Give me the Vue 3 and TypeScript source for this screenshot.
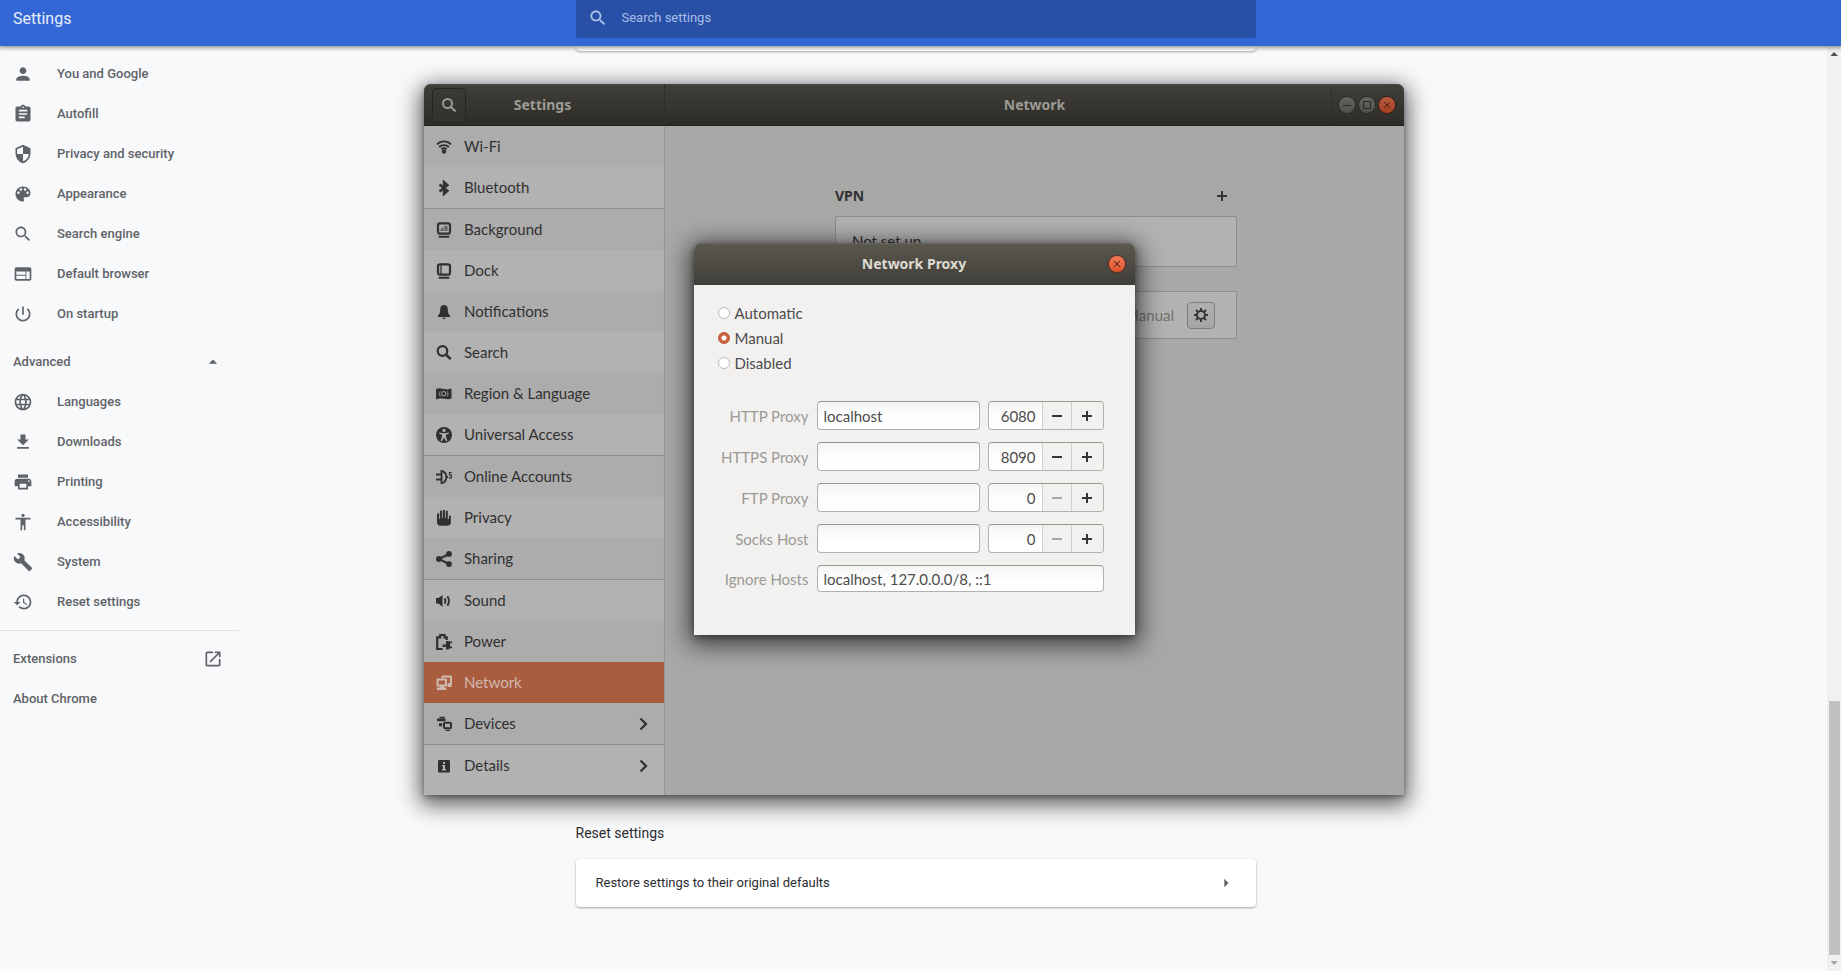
<script setup lang="ts">
import { ref } from 'vue'

interface NavItem {
  label: string
  icon: string
}

interface PanelItem {
  label: string
  icon: string
  endsGroup?: boolean
  submenu?: boolean
}

interface ProxyRow {
  id: string
  label: string
  host: string
  port: number
}

const basicItems: NavItem[] = [
  { label: 'You and Google', icon: 'M12 12c2.21 0 4-1.79 4-4s-1.79-4-4-4-4 1.79-4 4 1.79 4 4 4zm0 2c-2.67 0-8 1.34-8 4v2h16v-2c0-2.66-5.33-4-8-4z' },
  { label: 'Autofill', icon: 'M19 3h-4.18C14.4 1.84 13.3 1 12 1c-1.3 0-2.4.84-2.82 2H5c-1.1 0-2 .9-2 2v14c0 1.1.9 2 2 2h14c1.1 0 2-.9 2-2V5c0-1.1-.9-2-2-2zm-7 0c.55 0 1 .45 1 1s-.45 1-1 1-1-.45-1-1 .45-1 1-1zm2 14H7v-2h7v2zm3-4H7v-2h10v2zm0-4H7V7h10v2z' },
  { label: 'Privacy and security', icon: 'M12 1L3 5v6c0 5.55 3.84 10.74 9 12 5.16-1.26 9-6.45 9-12V5l-9-4zm0 10.99h7c-.53 4.12-3.28 7.79-7 8.94V12H5V6.3l7-3.11v8.8z' },
  { label: 'Appearance', icon: 'M12 3c-4.97 0-9 4.03-9 9s4.03 9 9 9c.83 0 1.5-.67 1.5-1.5 0-.39-.15-.74-.39-1.01-.23-.26-.38-.61-.38-.99 0-.83.67-1.5 1.5-1.5H16c2.76 0 5-2.24 5-5 0-4.42-4.03-8-9-8zm-5.5 9c-.83 0-1.5-.67-1.5-1.5S5.67 9 6.5 9 8 9.67 8 10.5 7.33 12 6.5 12zm3-4C8.67 8 8 7.33 8 6.5S8.67 5 9.5 5s1.5.67 1.5 1.5S10.33 8 9.5 8zm5 0c-.83 0-1.5-.67-1.5-1.5S13.67 5 14.5 5s1.5.67 1.5 1.5S15.33 8 14.5 8zm3 4c-.83 0-1.5-.67-1.5-1.5S16.67 9 17.5 9s1.5.67 1.5 1.5-.67 1.5-1.5 1.5z' },
  { label: 'Search engine', icon: 'M15.5 14h-.79l-.28-.27C15.41 12.59 16 11.11 16 9.5 16 5.91 13.09 3 9.5 3S3 5.91 3 9.5 5.91 16 9.5 16c1.61 0 3.09-.59 4.23-1.57l.27.28v.79l5 4.99L20.49 19l-4.99-5zm-6 0C7.01 14 5 11.99 5 9.5S7.01 5 9.5 5 14 7.01 14 9.5 11.99 14 9.5 14z' },
  { label: 'Default browser', icon: 'M20 4H4c-1.1 0-1.99.9-1.99 2L2 18c0 1.1.9 2 2 2h16c1.1 0 2-.9 2-2V6c0-1.1-.9-2-2-2zm-5 14H4v-4h11v4zm0-5H4V9h11v4zm5 5h-4V9h4v9z' },
  { label: 'On startup', icon: 'M13 3h-2v10h2V3zm4.83 2.17l-1.42 1.42C17.99 7.86 19 9.81 19 12c0 3.87-3.13 7-7 7s-7-3.13-7-7c0-2.19 1.01-4.14 2.58-5.42L6.17 5.17C4.23 6.82 3 9.26 3 12c0 4.97 4.03 9 9 9s9-4.03 9-9c0-2.74-1.23-5.18-3.17-6.83z' }
]

const advancedItems: NavItem[] = [
  { label: 'Languages', icon: 'M11.99 2C6.47 2 2 6.48 2 12s4.47 10 9.99 10C17.52 22 22 17.52 22 12S17.52 2 11.99 2zm6.93 6h-2.95c-.32-1.25-.78-2.45-1.38-3.56 1.84.63 3.37 1.91 4.33 3.56zM12 4.04c.83 1.2 1.48 2.53 1.91 3.96h-3.82c.43-1.43 1.08-2.76 1.91-3.96zM4.26 14C4.1 13.36 4 12.69 4 12s.1-1.36.26-2h3.38c-.08.66-.14 1.32-.14 2s.06 1.34.14 2H4.26zm.82 2h2.95c.32 1.25.78 2.45 1.38 3.56-1.84-.63-3.37-1.9-4.33-3.56zm2.95-8H5.08c.96-1.66 2.49-2.93 4.33-3.56C8.81 5.55 8.35 6.75 8.03 8zM12 19.96c-.83-1.2-1.48-2.53-1.91-3.96h3.82c-.43 1.43-1.08 2.76-1.91 3.96zM14.34 14H9.66c-.09-.66-.16-1.32-.16-2s.07-1.35.16-2h4.68c.09.65.16 1.32.16 2s-.07 1.34-.16 2zm.25 5.56c.6-1.11 1.06-2.31 1.38-3.56h2.95c-.96 1.65-2.49 2.93-4.33 3.56zM16.36 14c.08-.66.14-1.32.14-2s-.06-1.34-.14-2h3.38c.16.64.26 1.31.26 2s-.1 1.36-.26 2h-3.38z' },
  { label: 'Downloads', icon: 'M19 9h-4V3H9v6H5l7 7 7-7zM5 18v2h14v-2H5z' },
  { label: 'Printing', icon: 'M19 8H5c-1.66 0-3 1.34-3 3v6h4v4h12v-4h4v-6c0-1.66-1.34-3-3-3zm-3 11H8v-5h8v5zm3-7c-.55 0-1-.45-1-1s.45-1 1-1 1 .45 1 1-.45 1-1 1zm-1-9H6v4h12V3z' },
  { label: 'Accessibility', icon: 'M12 2c1.1 0 2 .9 2 2s-.9 2-2 2-2-.9-2-2 .9-2 2-2zm9 7h-6v13h-2v-6h-2v6H9V9H3V7h18v2z' },
  { label: 'System', icon: 'M22.7 19l-9.1-9.1c.9-2.3.4-5-1.5-6.9-2-2-5-2.4-7.4-1.3L9 6 6 9 1.6 4.7C.4 7.1.9 10.1 2.9 12.1c1.9 1.9 4.6 2.4 6.9 1.5l9.1 9.1c.4.4 1 .4 1.4 0l2.3-2.3c.5-.4.5-1.1.1-1.4z' },
  { label: 'Reset settings', icon: 'M13 3c-4.97 0-9 4.03-9 9H1l3.89 3.89.07.14L9 12H6c0-3.87 3.13-7 7-7s7 3.13 7 7-3.13 7-7 7c-1.93 0-3.68-.79-4.94-2.06l-1.42 1.42C8.27 19.99 10.51 21 13 21c4.97 0 9-4.03 9-9s-4.03-9-9-9zm-1 5v5l4.28 2.54.72-1.21-3.5-2.08V8H12z' }
]

const panelItems: PanelItem[] = [
  { label: 'Wi-Fi', icon: 'wifi' },
  { label: 'Bluetooth', icon: 'bluetooth', endsGroup: true },
  { label: 'Background', icon: 'background' },
  { label: 'Dock', icon: 'dock' },
  { label: 'Notifications', icon: 'bell' },
  { label: 'Search', icon: 'search' },
  { label: 'Region & Language', icon: 'flag' },
  { label: 'Universal Access', icon: 'access', endsGroup: true },
  { label: 'Online Accounts', icon: 'accounts' },
  { label: 'Privacy', icon: 'hand' },
  { label: 'Sharing', icon: 'share', endsGroup: true },
  { label: 'Sound', icon: 'sound' },
  { label: 'Power', icon: 'power' },
  { label: 'Network', icon: 'network' },
  { label: 'Devices', icon: 'devices', submenu: true, endsGroup: true },
  { label: 'Details', icon: 'details', submenu: true }
]

const activePanel = ref('Network')
const modes = ['Automatic', 'Manual', 'Disabled']
const mode = ref('Manual')
const proxies = ref<ProxyRow[]>([
  { id: 'http', label: 'HTTP Proxy', host: 'localhost', port: 6080 },
  { id: 'https', label: 'HTTPS Proxy', host: '', port: 8090 },
  { id: 'ftp', label: 'FTP Proxy', host: '', port: 0 },
  { id: 'socks', label: 'Socks Host', host: '', port: 0 }
])
const ignoreHosts = ref('localhost, 127.0.0.0/8, ::1')
const advancedOpen = ref(true)
</script>

<template>
  <div class="page">
    <header class="topbar">
      <h1>Settings</h1>
      <label class="search">
        <svg viewBox="0 0 24 24" class="ic20"><path :d="basicItems[4].icon" /></svg>
        <input type="text" placeholder="Search settings" aria-label="Search settings" />
      </label>
    </header>

    <div class="content">
      <nav class="menu">
        <a v-for="item in basicItems" :key="item.label" href="#" class="menu-item">
          <svg viewBox="0 0 24 24" class="ic20"><path :d="item.icon" /></svg>
          <span>{{ item.label }}</span>
        </a>
        <button type="button" class="advanced" @click="advancedOpen = !advancedOpen">
          <span>Advanced</span>
          <svg viewBox="0 0 24 24" class="ic20"><path d="M7 14l5-5 5 5z" /></svg>
        </button>
        <template v-if="advancedOpen">
          <a v-for="item in advancedItems" :key="item.label" href="#" class="menu-item">
            <svg viewBox="0 0 24 24" class="ic20"><path :d="item.icon" /></svg>
            <span>{{ item.label }}</span>
          </a>
        </template>
        <hr />
        <a href="#" class="menu-link">
          <span>Extensions</span>
          <svg viewBox="0 0 24 24" class="ic20"><path d="M19 19H5V5h7V3H5c-1.11 0-2 .9-2 2v14c0 1.1.89 2 2 2h14c1.1 0 2-.9 2-2v-7h-2v7zM14 3v2h3.59l-9.83 9.83 1.41 1.41L19 6.41V10h2V3h-7z" /></svg>
        </a>
        <a href="#" class="menu-link"><span>About Chrome</span></a>
      </nav>

      <main class="column">
        <div class="card card-tail"></div>
        <section class="reset">
          <h2>Reset settings</h2>
          <button type="button" class="card restore">
            <span>Restore settings to their original defaults</span>
            <svg viewBox="0 0 24 24" class="ic20"><path d="M10 7l5 5-5 5z" /></svg>
          </button>
        </section>
      </main>
    </div>

    <div class="scrollbar" aria-hidden="true">
      <svg viewBox="0 0 14 16"><path d="M3.500 10L7 6l4 4z" fill="#505050" /></svg>
      <div class="thumb"></div>
      <svg viewBox="0 0 14 16"><path d="M3.500 6L7 10l4-4z" fill="#a3a3a3" /></svg>
    </div>

    <div class="window">
      <header class="titlebar">
        <div class="title-left">
          <button type="button" class="find" aria-label="Search">
            <svg viewBox="0 0 16 16"><circle cx="6.500" cy="6.500" r="4.500" /><path d="M10 10l4.500 4.500" /></svg>
          </button>
          <h2>Settings</h2>
        </div>
        <div class="title-right">
          <h2>Network</h2>
          <div class="controls">
            <button type="button" class="round" aria-label="Minimize">
              <svg viewBox="0 0 16 16"><path d="M4 8.500h8" /></svg>
            </button>
            <button type="button" class="round" aria-label="Maximize">
              <svg viewBox="0 0 16 16"><path d="M4.500 4.500h7v7h-7z" /></svg>
            </button>
            <button type="button" class="round close dim" aria-label="Close">
              <svg viewBox="0 0 16 16"><path d="M5 5l6 6M11 5l-6 6" /></svg>
            </button>
          </div>
        </div>
      </header>

      <div class="window-body">
        <nav class="panels">
          <button
            v-for="item in panelItems"
            :key="item.label"
            type="button"
            class="panel"
            :class="{ active: item.label === activePanel, ends: item.endsGroup }"
            @click="activePanel = item.label"
          >
            <svg class="sym" viewBox="0 0 16 16">
              <template v-if="item.icon === 'wifi'">
                <circle cx="8" cy="12.500" r="2.200" />
                <path class="ln" d="M1 5.400C5 1.400 11 1.400 15 5.400M3.100 8c2.700-2.600 7.100-2.600 9.800 0M5.300 10.300c1.500-1.300 3.900-1.300 5.400 0" stroke-width="1.800" />
              </template>
              <path v-else-if="item.icon === 'bluetooth'" class="ln" d="M3.500 4.500l8 6.300L8 14V2l3.500 3.200-8 6.300" stroke-width="2.400" />
              <template v-else-if="item.icon === 'background'">
                <rect class="ln" x="2" y="1.300" width="12" height="10.400" rx="2" stroke-width="2.200" />
                <path d="M4.500 9V7.500L7.500 4.500V9zM8.500 4h3v5h-3z" opacity=".6" />
                <path class="ln" d="M3.500 14.800h9" stroke-width="2" stroke-linecap="round" />
              </template>
              <template v-else-if="item.icon === 'dock'">
                <rect class="ln" x="2" y="1.300" width="12" height="10.400" rx="2" stroke-width="2.200" />
                <path class="ln" d="M5 2v9" stroke-width="1.200" />
                <path class="ln" d="M3.500 14.800h9" stroke-width="2" stroke-linecap="round" />
              </template>
              <path v-else-if="item.icon === 'bell'" d="M8 1C5.200 1 4.200 3 4.200 5.500c0 3.500-.7 4.500-2.200 6V13h12v-1.500c-1.500-1.500-2.200-2.500-2.200-6C11.800 3 10.800 1 8 1zM6.300 13.700a1.700 1.400 0 003.400 0z" />
              <template v-else-if="item.icon === 'search'">
                <circle class="ln" cx="6.500" cy="6" r="4.800" stroke-width="2.200" />
                <path class="ln" d="M10 9.500l4.700 4.700" stroke-width="2.600" />
              </template>
              <template v-else-if="item.icon === 'flag'">
                <path d="M0 3c3-1.300 5-.6 8 0s5 .5 7.500-.4V12.500c-3 1.300-5 .5-7.500.2s-5-.6-8 .8z" />
                <circle cx="7.700" cy="7.700" r="2.200" fill="none" stroke="#acacac" />
                <path d="M4.300 5.300c-1 1.500-1 3.500 0 5M11.200 5.300c1 1.500 1 3.500 0 5" fill="none" stroke="#acacac" stroke-width=".8" />
              </template>
              <template v-else-if="item.icon === 'access'">
                <circle cx="8" cy="8" r="8" />
                <circle cx="8" cy="3.400" r="1.600" fill="#b2b2b2" />
                <path d="M3.200 5.400l3.300.8h3l3.300-.8.200 1.100-3.100 1.200v2l1.500 4-1.300.5L8 10.400l-2.100 3.800-1.300-.5 1.500-4v-2L3 6.500z" fill="#b2b2b2" />
              </template>
              <template v-else-if="item.icon === 'accounts'">
                <path class="ln" d="M5.500 2v12.200c3-.5 4.800-3 4.800-6.100S8.500 2.500 5.500 2z" stroke-width="1.800" />
                <path class="ln" d="M0 5.500h5M0 10.500h5M10 8h2" stroke-width="2" />
                <path class="ln" d="M15.700 3.500h-2.200V6h1.800v2.800h-2.500" stroke-width="1.200" />
              </template>
              <path v-else-if="item.icon === 'hand'" d="M1 4.200a1 1 0 012 0V9h.8V1.500a1 1 0 012.100 0V8h.8V1a1.100 1.100 0 012.200 0v7h.8V1.500a1 1 0 012.100 0V9h1.100V6.500a1 1 0 012 0V12c0 2.500-1.400 3.800-3.500 3.800H4.500C2.300 15.800 1 14.500 1 12z" />
              <template v-else-if="item.icon === 'share'">
                <circle cx="2.900" cy="8" r="2.900" /><circle cx="13" cy="2.900" r="2.900" /><circle cx="13" cy="13.100" r="2.900" />
                <path class="ln" d="M13 3L3 8l10 5" stroke-width="2" />
              </template>
              <template v-else-if="item.icon === 'sound'">
                <path d="M0 5h2.500L6.500 2v12l-4-3.500H0z" />
                <path class="ln" d="M8.700 5.300c1 1.700 1 3.700 0 5.400M11.400 3.300c2 3 2 6.400 0 9.400" stroke-width="1.900" />
              </template>
              <template v-else-if="item.icon === 'power'">
                <path class="ln" d="M10.700 6V3.300H8.500V1H4.200v2.300H1.200V15h5.500" stroke-width="2.200" />
                <path d="M16 7.500v1.800h-2v3.200h2v1.700h-2.200c-.7 1.300-2.200 1.600-3.800 1.300V13H6.500v-2.500H10V7.200c1.600-.4 3 .2 3.800.3z" />
              </template>
              <template v-else-if="item.icon === 'network'">
                <path class="ln" d="M6.500 3.200V1.500H15v7.500h-3M1.500 4.500H10v6H1.500z" stroke-width="2" stroke-linejoin="round" />
                <path d="M4 11h4v2H4zM.8 12.600h9.500V15H.8zM11.500 9h4v3h-4z" />
              </template>
              <template v-else-if="item.icon === 'devices'">
                <path d="M3.500.8h5.200v1.400H3.500zM1 2.500h8.500v2.700H1zM3 7.200h3.200v3H3z" />
                <rect class="ln" x="8" y="6.800" width="7" height="5.400" rx="1" stroke-width="2" />
                <path d="M9.500 13.800h4.500V15H9.500z" />
              </template>
              <template v-else>
                <rect x="2" y="2" width="12" height="12.500" rx="1.200" />
                <path d="M7 4h2v2H7zM6 7h3v4h1v1.500H6V11h1V8.300H6z" fill="#b2b2b2" />
              </template>
            </svg>
            <span class="panel-label">{{ item.label }}</span>
            <svg v-if="item.submenu" class="sym" viewBox="0 0 16 16">
              <path class="ln" d="M4.500 2.500L10 8l-5.500 5.500" stroke-width="2.200" />
            </svg>
          </button>
        </nav>

        <section class="network">
          <div class="vpn-head">
            <h3>VPN</h3>
            <button type="button" class="add" aria-label="Add VPN">
              <svg viewBox="0 0 16 16"><path d="M8 3v10M3 8h10" /></svg>
            </button>
          </div>
          <div class="box vpn-box">Not set up</div>
          <div class="box proxy-box">
            <span>Network Proxy</span>
            <span class="state">Manual</span>
            <button type="button" class="gear" aria-label="Proxy options">
              <svg viewBox="0 0 16 16">
                <circle cx="8" cy="8" r="4" fill="none" stroke="#353535" stroke-width="2" />
                <path d="M8 1v2.500M8 12.500V15M1 8h2.500M12.500 8H15M3 3l2 2M11 11l2 2M13 3l-2 2M5 11l-2 2" stroke="#353535" stroke-width="2" />
              </svg>
            </button>
          </div>
        </section>
      </div>

      <div class="overlay">
        <form class="dialog" role="dialog" aria-labelledby="dialog-title" @submit.prevent>
          <header class="dialog-bar">
            <h2 id="dialog-title">Network Proxy</h2>
            <button type="button" class="round close" aria-label="Close">
              <svg viewBox="0 0 16 16"><path d="M5 5l6 6M11 5l-6 6" /></svg>
            </button>
          </header>
          <div class="dialog-body">
            <div class="modes">
              <label v-for="m in modes" :key="m">
                <input v-model="mode" type="radio" name="mode" :value="m" />
                <span>{{ m }}</span>
              </label>
            </div>
            <div class="fields">
              <template v-for="row in proxies" :key="row.id">
                <label :for="row.id">{{ row.label }}</label>
                <input :id="row.id" v-model="row.host" type="text" class="entry" />
                <div class="spin">
                  <input v-model.number="row.port" type="text" inputmode="numeric" :aria-label="row.label + ' port'" />
                  <button type="button" :disabled="row.port === 0" aria-label="Decrease" @click="row.port--">
                    <svg viewBox="0 0 16 16"><path d="M3 8h10" /></svg>
                  </button>
                  <button type="button" aria-label="Increase" @click="row.port++">
                    <svg viewBox="0 0 16 16"><path d="M8 3v10M3 8h10" /></svg>
                  </button>
                </div>
              </template>
              <label for="ignore">Ignore Hosts</label>
              <input id="ignore" v-model="ignoreHosts" type="text" class="entry wide" />
            </div>
          </div>
        </form>
      </div>
    </div>
  </div>
</template>

<style>
body {
  background: #f8f9fb;
}
</style>

<style scoped>
* {
  box-sizing: border-box;
}

h1,
h2,
h3 {
  margin: 0;
}

button,
input {
  margin: 0;
  padding: 0;
  border: 0;
  background: none;
  font: inherit;
  color: inherit;
}

a {
  color: inherit;
  text-decoration: none;
}

.page {
  position: relative;
  display: flex;
  flex-direction: column;
  min-height: 100vh;
  overflow: hidden;
  background: #f8f9fb;
  color: #5f6368;
  font: 500 13px/20px Roboto, sans-serif;
}

.ic20 {
  width: 20px;
  height: 20px;
  fill: currentColor;
  flex: none;
}

/* Browser settings page */
.topbar,
.content {
  display: grid;
  grid-template-columns: minmax(0, 1fr) 680px minmax(0, 1fr);
  padding-right: 10px;
}

.topbar {
  position: relative;
  height: 46px;
  background: #3367d6;
  box-shadow: 0 1px 4px 1px rgba(0, 0, 0, 0.4);
  z-index: 1;
}

.topbar h1 {
  padding: 9px 13px;
  color: #e8eefa;
  font-size: 16px;
  font-weight: 400;
  line-height: 20px;
}

.search {
  display: flex;
  align-items: center;
  gap: 14px;
  height: 38px;
  padding: 0 12px 2px;
  border-radius: 0 0 2px 2px;
  background: #2850a7;
  color: #b4c6ec;
}

.search input {
  flex: 1;
  font-weight: 400;
  outline: 0;
}

.search input::placeholder {
  color: #a9bde6;
  opacity: 1;
}

.content {
  flex: 1;
}

.menu {
  width: 239px;
  padding-top: 8px;
}

.menu-item,
.menu-link,
.advanced {
  display: flex;
  align-items: center;
  width: 100%;
  height: 40px;
  padding: 0 16px 0 13px;
}

.menu-item {
  gap: 24px;
}

.menu-link,
.advanced {
  justify-content: space-between;
}

.advanced {
  margin-top: 8px;
}

.menu hr {
  height: 1px;
  margin: 8px 0;
  border: 0;
  background: #e0e1e3;
}

.column {
  display: flex;
  flex-direction: column;
  justify-content: space-between;
  color: #2b2c2f;
  font-weight: 400;
}

.card {
  border-radius: 4px;
  background: #fff;
  box-shadow: 0 1px 2px rgba(60, 64, 67, 0.3), 0 1px 3px rgba(60, 64, 67, 0.2);
}

.card-tail {
  height: 5px;
  border-radius: 0 0 4px 4px;
}

.reset {
  padding-bottom: 64px;
}

.reset h2 {
  margin-bottom: 16px;
  font-size: 14px;
  font-weight: 400;
  line-height: 20px;
}

.restore {
  display: flex;
  align-items: center;
  justify-content: space-between;
  width: 100%;
  height: 48px;
  padding: 0 20px;
}

.restore .ic20 {
  color: #5f6368;
}

.scrollbar {
  position: absolute;
  top: 46px;
  right: 0;
  bottom: 0;
  display: flex;
  flex-direction: column;
  align-items: center;
  justify-content: space-between;
  width: 14px;
  background: #f1f1f1;
}

.scrollbar svg {
  flex: none;
  width: 14px;
  height: 16px;
}

.thumb {
  width: 11px;
  height: 254px;
  margin-top: auto;
  background: #c1c1c1;
}

/* Desktop window floating over the page */
.window {
  position: absolute;
  left: 424px;
  top: 84px;
  display: flex;
  flex-direction: column;
  width: 980px;
  border-radius: 7px 7px 0 0;
  background: #a8a8a6;
  box-shadow: 0 6px 22px 4px rgba(0, 0, 0, 0.62), 0 2px 5px rgba(0, 0, 0, 0.3);
  color: #303030;
  font: 400 15px/20px Lato, sans-serif;
  z-index: 2;
}

.titlebar {
  display: flex;
  height: 42px;
  border-radius: 7px 7px 0 0;
  background: linear-gradient(#403f39, #2c2b27);
  box-shadow: inset 0 1px #4b4a43, inset 0 -1px #22211e;
  color: #9c9b94;
}

h2,
h3 {
  font: 700 14px/20px 'Noto Sans', sans-serif;
}

.reset h2 {
  font-family: Roboto, sans-serif;
}

.title-left {
  display: flex;
  align-items: center;
  width: 241px;
  padding: 0 8px;
  border-right: 1px solid #2f2e2a;
}

.title-left h2 {
  flex: 1;
  padding-right: 37px;
  text-align: center;
}

.find {
  display: grid;
  place-items: center;
  width: 34px;
  height: 35px;
  border: 1px solid #262521;
  border-radius: 4px;
  background: linear-gradient(#3a3934, #32312c);
}

.find svg {
  width: 16px;
  height: 16px;
  fill: none;
  stroke: #9c9b94;
  stroke-width: 2;
}

.title-right {
  display: grid;
  grid-template-columns: 73px 1fr 73px;
  align-items: center;
  flex: 1;
}

.title-right h2 {
  grid-column: 2;
  text-align: center;
}

.controls {
  display: flex;
  align-items: center;
  justify-content: flex-end;
  gap: 4px;
  height: 34px;
  padding-right: 9px;
  border-left: 1px solid #302f2b;
}

.round {
  display: grid;
  place-items: center;
  width: 16px;
  height: 16px;
  border-radius: 50%;
  background: linear-gradient(#65645d, #4f4e48);
  box-shadow: 0 0 0 1px #2a2925;
}

.round svg {
  width: 16px;
  height: 16px;
  fill: none;
  stroke: #2a2925;
}

.close {
  background: linear-gradient(#f2795a, #e0532b);
  box-shadow: 0 0 0 1px #5e2a18;
}

.close svg {
  stroke: #4a2013;
}

.dim {
  background: linear-gradient(#b85a3c, #a44020);
  box-shadow: 0 0 0 1px #3e1d11;
}

.window-body {
  display: flex;
}

.panels {
  width: 241px;
  padding-bottom: 9px;
  border-right: 1px solid #959593;
  background: #b2b2b2;
}

.panel {
  display: flex;
  align-items: center;
  gap: 12px;
  width: 100%;
  height: 41px;
  padding: 0 12px;
  text-align: left;
}

.panel:nth-child(odd) {
  background: #acacac;
}

.panel.ends {
  height: 42px;
  border-bottom: 1px solid #8e8e8e;
}

.panel.active {
  background: #a95d3e;
  color: #cfb9af;
}

.panel-label {
  flex: 1;
  padding-bottom: 2px;
}

.sym {
  width: 16px;
  height: 16px;
  flex: none;
  fill: currentColor;
}

.ln {
  fill: none;
  stroke: currentColor;
}

.network {
  flex: 1;
  padding: 54px 167px 0 170px;
}

.vpn-head {
  display: flex;
  align-items: center;
  justify-content: space-between;
  height: 32px;
  margin-bottom: 4px;
  padding-right: 7px;
}

.add svg,
.spin svg {
  display: block;
  width: 16px;
  height: 16px;
  stroke: #353535;
  stroke-width: 2;
}

.box {
  border: 1px solid #8e8e8c;
  border-radius: 2px;
  background: #b2b2b2;
}

.vpn-box {
  height: 51px;
  margin-bottom: 24px;
  padding: 14px 16px;
}

.proxy-box {
  display: flex;
  align-items: center;
  height: 48px;
  padding: 0 21px 0 16px;
}

.state {
  margin-left: auto;
  color: #73736f;
}

.gear {
  display: grid;
  place-items: center;
  width: 28px;
  height: 27px;
  margin-left: 13px;
  border: 1px solid #7d7d7b;
  border-radius: 4px;
  background: linear-gradient(#b0b0ae, #a5a5a3);
}

.gear svg {
  width: 16px;
  height: 16px;
}

.overlay {
  position: absolute;
  inset: 0;
  display: flex;
  align-items: center;
  justify-content: center;
  padding-bottom: 1px;
}

.dialog {
  width: 441px;
  border-radius: 7px 7px 0 0;
  background: #f2f1ef;
  box-shadow: 0 5px 24px 5px rgba(0, 0, 0, 0.62), 0 2px 6px rgba(0, 0, 0, 0.4);
  color: #4c4c4c;
}

.dialog-bar {
  display: grid;
  grid-template-columns: 26px 1fr 26px;
  align-items: center;
  height: 42px;
  border-radius: 7px 7px 0 0;
  background: linear-gradient(#5b584e, #403e39);
  box-shadow: inset 0 1px #69665b;
  color: #dfdbd2;
}

.dialog-bar h2 {
  grid-column: 2;
  text-align: center;
}

.dialog-body {
  padding: 15px 31px 43px 24px;
}

.modes {
  display: grid;
  margin-bottom: 26px;
}

.modes label {
  display: flex;
  align-items: center;
  gap: 5px;
  height: 25px;
}

.modes input {
  appearance: none;
  width: 12px;
  height: 12px;
  border: 1px solid #bdbbb8;
  border-radius: 50%;
  background: #fff;
}

.modes input:checked {
  border-color: #b95531;
  background: radial-gradient(circle, #fff 0 2px, #cc6640 3px);
}

.fields {
  display: grid;
  grid-template-columns: 91px 1fr 116px;
  column-gap: 8px;
  row-gap: 12px;
  align-items: center;
}

.fields label {
  margin-left: -6px;
  color: #9a9996;
  text-align: right;
}

.entry {
  width: 100%;
  height: 29px;
  padding: 0 6px;
}

.wide {
  grid-column: 2 / 4;
  height: 27px;
}

.entry,
.spin {
  border: 1px solid #b3b1ad;
  border-top-color: #97958f;
  border-radius: 4px;
  background: linear-gradient(#f4f4f3, #fff 60%);
}

.spin {
  display: grid;
  grid-template-columns: 1fr 29px 32px;
  height: 29px;
  overflow: hidden;
}

.spin input {
  min-width: 0;
  padding-right: 6px;
  text-align: right;
}

.spin button {
  display: grid;
  place-items: center;
  border-left: 1px solid #d2d0cd;
  background: #f2f1ef;
}

.spin button:disabled svg {
  stroke: #a9a8a5;
}
</style>
